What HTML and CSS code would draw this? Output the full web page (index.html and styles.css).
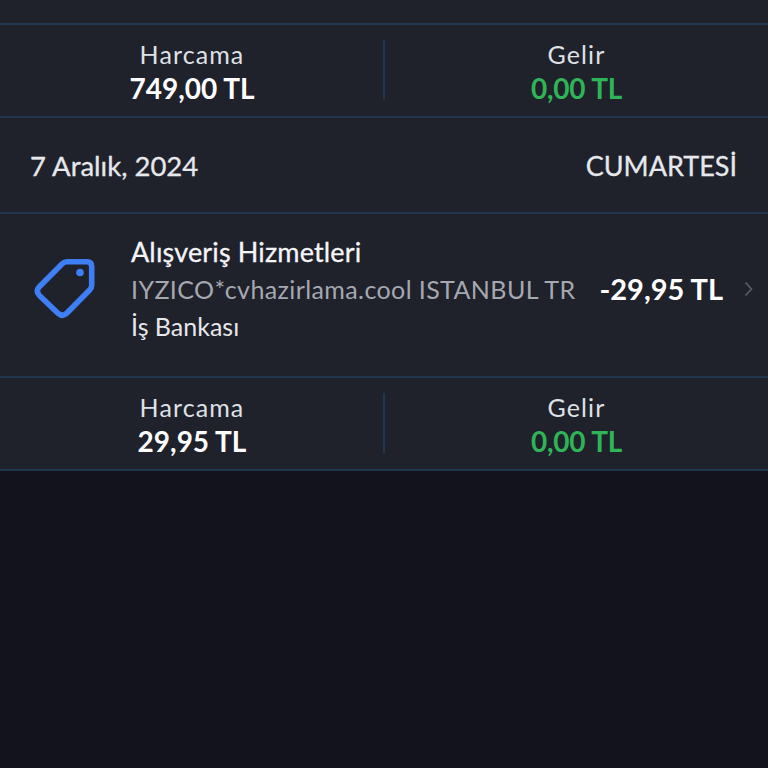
FILE: index.html
```html
<!DOCTYPE html>
<html lang="tr">
<head>
  <meta charset="UTF-8">
  <title>Hesap Hareketleri</title>
  <meta name="viewport" content="width=device-width, initial-scale=1.0">
  <link rel="stylesheet" href="styles.css">
</head>
<body>
  <div class="list">
    <div class="top-gap"></div>

    <div class="summary">
      <div class="summary-col">
        <span class="summary-label">Harcama</span>
        <span class="summary-value">749,00 TL</span>
      </div>
      <div class="summary-col">
        <span class="summary-label">Gelir</span>
        <span class="summary-value income">0,00 TL</span>
      </div>
    </div>

    <div class="day-head">
      <span class="day-date">7 Aralık, 2024</span>
      <span class="day-name">CUMARTESİ</span>
    </div>

    <div class="tx">
      <svg class="tx-icon" width="62" height="64" viewBox="0 0 62 64" fill="none">
        <path d="M33 4.7H53Q57.7 4.7 57.7 9.4V28Q57.7 31 55.6 33L33 56Q28.6 60.3 24.2 56.4L5.4 38.4Q1.2 34 5.6 29.4L28 7Q30.4 4.7 33 4.7Z" stroke="#3f7ff5" stroke-width="5.6" stroke-linejoin="round"/>
        <circle cx="46" cy="15.5" r="3.8" fill="#3f7ff5"/>
      </svg>
      <div class="tx-text">
        <span class="tx-title">Alışveriş Hizmetleri</span>
        <span class="tx-desc">IYZICO*cvhazirlama.cool ISTANBUL TR</span>
        <span class="tx-bank">İş Bankası</span>
      </div>
      <span class="tx-amount">-29,95 TL</span>
      <svg class="tx-arrow" width="9" height="16" viewBox="0 0 9 16" fill="none">
        <path d="M1.5 1.5L7.5 8L1.5 14.5" stroke="#5b5e68" stroke-width="1.6"/>
      </svg>
    </div>

    <div class="summary">
      <div class="summary-col">
        <span class="summary-label">Harcama</span>
        <span class="summary-value">29,95 TL</span>
      </div>
      <div class="summary-col">
        <span class="summary-label">Gelir</span>
        <span class="summary-value income">0,00 TL</span>
      </div>
    </div>
  </div>
</body>
</html>
```

FILE: styles.css
```css
html, body {
  height: 100%;
}
body {
  margin: 0;
  background: #13131d;
  color: #eceef2;
  font-family: "Lato", "Liberation Sans", sans-serif;
  overflow: hidden;
}
span {
  white-space: nowrap;
}

.list {
  background: #1f212b;
  display: flex;
  flex-direction: column;
}
.top-gap {
  height: 23px;
  border-bottom: 2px solid #203750;
}

/*totals under each day*/
.summary {
  box-sizing: border-box;
  height: 93px;
  padding-top: 15px;
  border-bottom: 2px solid #203750;
  display: grid;
  grid-template-columns: 1fr 1fr;
  align-items: start;
}
.summary-col {
  height: 60px;
  display: flex;
  flex-direction: column;
  align-items: center;
}
.summary-col:last-child {
  border-left: 2px solid #203750;
  margin-left: -1px;
}
.summary-label {
  margin-top: -1px;
  font-size: 25px;
  line-height: 30px;
  letter-spacing: 1.1px;
  color: #dfe1e6;
}
.summary-value {
  margin-top: 2px;
  font-size: 28px;
  line-height: 34px;
  font-weight: 700;
  color: #fff;
}
.income {
  letter-spacing: -0.2px;
  color: #2fb457;
}

.day-head {
  height: 94px;
  padding: 0 31px 0 30px;
  border-bottom: 2px solid #203750;
  display: flex;
  align-items: center;
  justify-content: space-between;
  color: #e6e8ec;
}
.day-date {
  font-size: 27.5px;
  -webkit-text-stroke: 0.3px #e6e8ec;
}
.day-name {
  font-size: 27px;
  -webkit-text-stroke: 0.3px #e6e8ec;
}

/*single transaction*/
.tx {
  box-sizing: border-box;
  height: 164px;
  padding-bottom: 13px;
  border-bottom: 2px solid #203750;
  display: flex;
  align-items: center;
}
.tx-icon {
  margin-left: 34px;
  flex: none;
}
.tx-text {
  margin-left: 35px;
  flex: 1;
  display: flex;
  flex-direction: column;
  gap: 1px;
}
.tx-title {
  font-size: 27px;
  line-height: 36px;
  letter-spacing: 0.15px;
  -webkit-text-stroke: 0.3px #f4f5f7;
  color: #f4f5f7;
}
.tx-desc {
  font-size: 25px;
  line-height: 36px;
  letter-spacing: 0.4px;
  color: #a5a8b0;
}
.tx-bank {
  font-size: 25px;
  line-height: 36px;
  color: #e6e8ec;
}
.tx-amount {
  font-size: 29px;
  font-weight: 700;
  color: #fff;
}
.tx-arrow {
  margin: 0 15px 0 21px;
  flex: none;
}
```
